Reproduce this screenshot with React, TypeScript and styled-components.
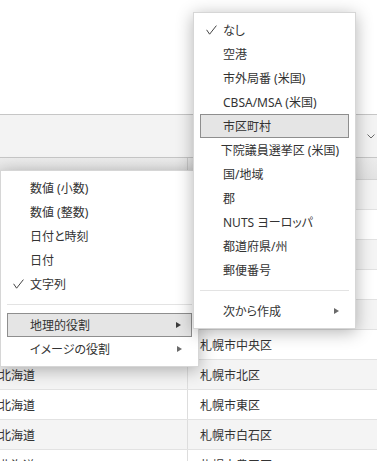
import React from "react";
import styled, { createGlobalStyle } from "styled-components";

const GlobalStyle = createGlobalStyle`
  html, body {
    margin: 0;
    padding: 0;
    background: #ffffff;
    overflow: hidden;
  }
  body {
    font-family: "Noto Sans", "Noto Sans CJK JP", sans-serif;
    color: #333333;
  }
`;

const Page = styled.div`
  position: relative;
  width: 377px;
  height: 461px;
  overflow: hidden;
  background: #ffffff;
`;

const TopArea = styled.div`
  height: 114px;
`;

const Toolbar = styled.div`
  box-sizing: border-box;
  height: 44px;
  background: #f3f3f3;
  border-top: 1px solid #c6c6c6;
  border-bottom: 1px solid #c6c6c6;
  display: flex;
  align-items: center;
  justify-content: flex-end;
  padding-right: 2px;
`;

const Table = styled.div`
  margin-left: -13px;
  display: flex;
  flex-direction: column;
`;

const HeaderRow = styled.div`
  box-sizing: border-box;
  height: 22px;
  display: grid;
  grid-template-columns: 201px 1fr;
  background: linear-gradient(#ececec, #e2e2e2);
  border-bottom: 1px solid #d2d2d2;
`;

const HeaderCell = styled.div<{ $divider?: boolean }>`
  border-right: ${(p) => (p.$divider ? "1px solid #cfcfcf" : "none")};
`;

const Row = styled.div<{ $shaded: boolean }>`
  box-sizing: border-box;
  height: 30px;
  display: grid;
  grid-template-columns: 201px 1fr;
  background: ${(p) => (p.$shaded ? "#f4f4f4" : "#ffffff")};
  border-bottom: 1px solid #e2e2e2;
`;

const Cell = styled.div<{ $divider?: boolean }>`
  display: flex;
  align-items: center;
  padding-left: 12px;
  font-size: 12px;
  color: #333333;
  white-space: nowrap;
  border-right: ${(p) => (p.$divider ? "1px solid #dddddd" : "none")};
`;

const Menu = styled.div<{ $top: number; $left: number; $width: number }>`
  position: absolute;
  top: ${(p) => p.$top}px;
  left: ${(p) => p.$left}px;
  width: ${(p) => p.$width}px;
  box-sizing: border-box;
  background: #ffffff;
  border: 1px solid #d6d6d6;
  padding: 5px 0 5px;
  box-shadow: 0 3px 16px rgba(0, 0, 0, 0.3);
  display: flex;
  flex-direction: column;
  font-feature-settings: "palt";
`;

const Item = styled.div<{ $active?: boolean }>`
  box-sizing: border-box;
  height: 24px;
  margin: 0 6px;
  padding: 0 10px 0 ${(p) => (p.$active ? 22 : 23)}px;
  display: flex;
  align-items: center;
  font-size: 12px;
  color: #333333;
  white-space: nowrap;
  background: ${(p) => (p.$active ? "#e5e5e5" : "transparent")};
  border: ${(p) => (p.$active ? "1px solid #8e8e8e" : "none")};
`;

const CheckSlot = styled.span`
  width: 17px;
  margin-left: -17px;
  display: flex;
  align-items: center;
`;

const Label = styled.span`
  flex: 1;
`;

const Separator = styled.div`
  height: 1px;
  margin: 8px 6px;
  background: #e3e3e3;
`;

const Arrow = styled.span<{ $dark?: boolean }>`
  width: 0;
  height: 0;
  border-top: 3.5px solid transparent;
  border-bottom: 3.5px solid transparent;
  border-left: 5px solid ${(p) => (p.$dark ? "#3c3c3c" : "#6a6a6a")};
`;

const Check = () => (
  <svg width="11" height="10" viewBox="0 0 11 10">
    <path d="M0.6 4.8 L3.6 9.2 L10.4 0.6" fill="none" stroke="#444" strokeWidth="1" />
  </svg>
);

const Chevron = () => (
  <svg width="8" height="5" viewBox="0 0 8 5">
    <path d="M0.5 0.5 L4 4 L7.5 0.5" fill="none" stroke="#6a6a6a" strokeWidth="1" />
  </svg>
);

type MenuEntry =
  | { kind: "item"; label: string; checked?: boolean; active?: boolean; sub?: boolean }
  | { kind: "sep" };

const typeMenu: MenuEntry[] = [
  { kind: "item", label: "数値 (小数)" },
  { kind: "item", label: "数値 (整数)" },
  { kind: "item", label: "日付と時刻" },
  { kind: "item", label: "日付" },
  { kind: "item", label: "文字列", checked: true },
  { kind: "sep" },
  { kind: "item", label: "地理的役割", active: true, sub: true },
  { kind: "item", label: "イメージの役割", sub: true },
];

const geoMenu: MenuEntry[] = [
  { kind: "item", label: "なし", checked: true },
  { kind: "item", label: "空港" },
  { kind: "item", label: "市外局番 (米国)" },
  { kind: "item", label: "CBSA/MSA (米国)" },
  { kind: "item", label: "市区町村", active: true },
  { kind: "item", label: "下院議員選挙区 (米国)" },
  { kind: "item", label: "国/地域" },
  { kind: "item", label: "郡" },
  { kind: "item", label: "NUTS ヨーロッパ" },
  { kind: "item", label: "都道府県/州" },
  { kind: "item", label: "郵便番号" },
  { kind: "sep" },
  { kind: "item", label: "次から作成", sub: true },
];

const rows = [
  "札幌市",
  "札幌市",
  "札幌市",
  "札幌市",
  "札幌市",
  "札幌市中央区",
  "札幌市北区",
  "札幌市東区",
  "札幌市白石区",
  "札幌市豊平区",
];

const MenuItems: React.FC<{ entries: MenuEntry[] }> = ({ entries }) => (
  <>
    {entries.map((e, i) =>
      e.kind === "sep" ? (
        <Separator key={i} />
      ) : (
        <Item key={i} $active={e.active}>
          <CheckSlot>{e.checked && <Check />}</CheckSlot>
          <Label>{e.label}</Label>
          {e.sub && <Arrow $dark={e.active} />}
        </Item>
      )
    )}
  </>
);

export default function App() {
  return (
    <Page>
      <GlobalStyle />
      <TopArea />
      <Toolbar>
        <Chevron />
      </Toolbar>
      <Table>
        <HeaderRow>
          <HeaderCell $divider />
          <HeaderCell />
        </HeaderRow>
        {rows.map((city, i) => (
          <Row key={i} $shaded={i % 2 === 0}>
            <Cell $divider>北海道</Cell>
            <Cell>{city}</Cell>
          </Row>
        ))}
      </Table>
      <Menu $top={170} $left={0} $width={199}>
        <MenuItems entries={typeMenu} />
      </Menu>
      <Menu $top={12} $left={193} $width={163}>
        <MenuItems entries={geoMenu} />
      </Menu>
    </Page>
  );
}
